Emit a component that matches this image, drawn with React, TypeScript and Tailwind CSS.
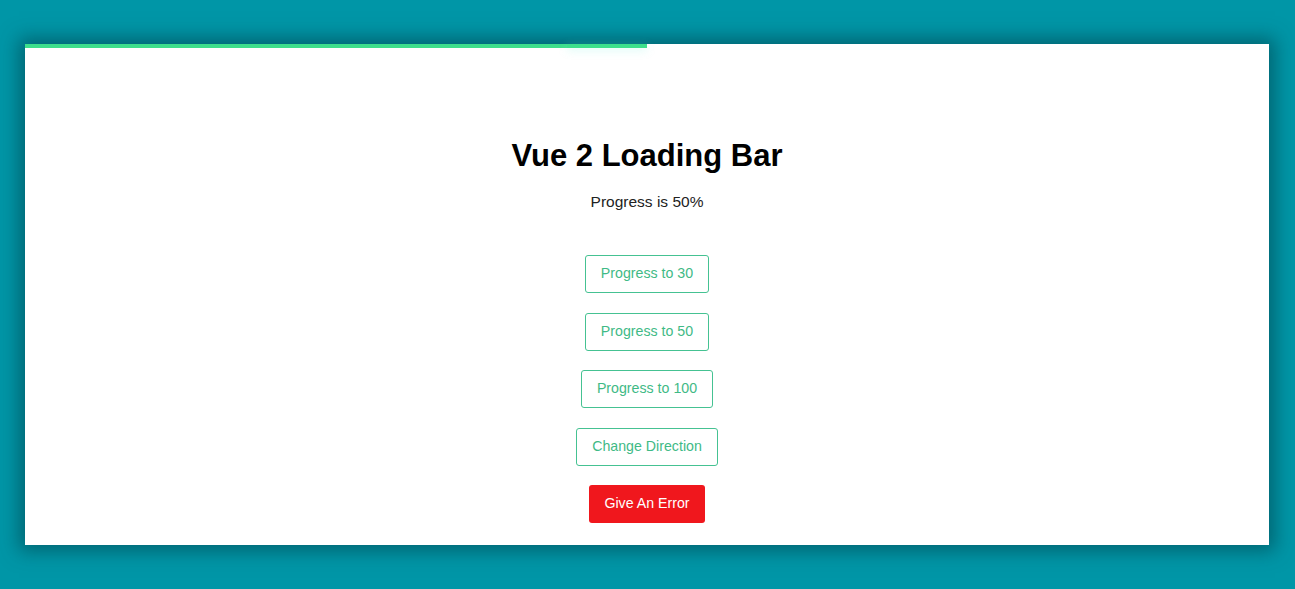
export default function App() {
  const progress = 50;
  const buttons = ["Progress to 30", "Progress to 50", "Progress to 100", "Change Direction"];

  return (
    <div className="min-h-[589px] bg-[#0096a7] pl-[25px] pr-[26px] py-[44px] font-['Liberation_Sans',Arial,sans-serif]">
      <div className="relative h-[501px] bg-white shadow-[0_0_18px_6px_rgba(0,60,70,0.55)]">
        {/* loading bar */}
        <div className="absolute left-0 top-0 h-[4px] bg-[#3ddf8c]" style={{ width: `${progress}%` }}>
          <div className="absolute right-0 top-0 h-[4px] w-[80px] shadow-[0_2px_8px_rgba(120,240,220,0.35)]" />
        </div>

        <div className="flex flex-col items-center pt-[93px]">
          <h1 className="text-[31px] font-bold leading-[37px] text-black">Vue 2 Loading Bar</h1>
          <p className="mt-[18px] text-[15.5px] leading-[19px] text-[#222]">Progress is {progress}%</p>

          <div className="mt-[44px] flex flex-col items-center gap-[19.5px]">
            {buttons.map((b) => (
              <button
                key={b}
                className="h-[38px] rounded-[3px] border border-[#45c292] px-[15px] text-[14.2px] text-[#3fba86]"
              >
                {b}
              </button>
            ))}
            <button className="h-[38px] rounded-[3px] bg-[#f0171d] px-[15px] text-[14.2px] text-white">
              Give An Error
            </button>
          </div>
        </div>
      </div>
    </div>
  );
}
